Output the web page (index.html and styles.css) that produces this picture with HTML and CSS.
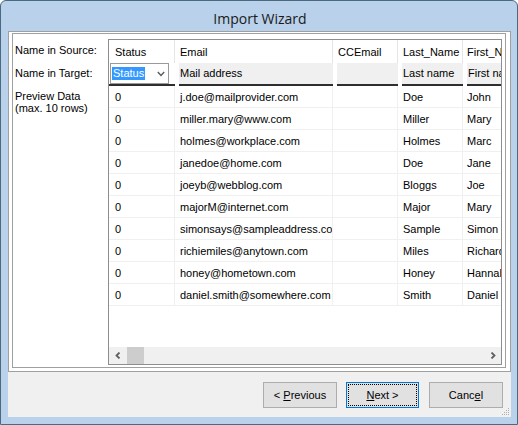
FILE: index.html
```html
<!DOCTYPE html>
<html>
<head>
<meta charset="utf-8">
<link rel="stylesheet" href="styles.css">
</head>
<body>
<div class="window">
  <div class="titlebar">Import Wizard</div>
  <div class="client">
    <div class="panel">
      <div class="inner">
        <div class="labels">
          <div class="lbl l1">Name in Source:</div>
          <div class="lbl l2">Name in Target:</div>
          <div class="lbl l3">Preview Data<br>(max. 10 rows)</div>
        </div>
        <div class="grid">
          <div class="rows">
            <div class="row head">
              <div class="c c1">Status</div>
              <div class="c c2">Email</div>
              <div class="c c3">CCEmail</div>
              <div class="c c4">Last_Name</div>
              <div class="c c5">First_Name</div>
            </div>
            <div class="row target">
              <div class="t t1">
                <div class="combo"><span class="sel">Status</span>
                  <svg class="chev" width="8" height="6" viewBox="0 0 8 6"><polyline points="0.8,1 4,4.4 7.2,1" fill="none" stroke="#5a5a5a" stroke-width="1.4"/></svg>
                </div>
              </div>
              <div class="t t2"><div class="tb">Mail address</div></div>
              <div class="t t3"><div class="tb"></div></div>
              <div class="t t4"><div class="tb">Last name</div></div>
              <div class="t t5"><div class="tb">First name</div></div>
            </div>
            <div class="row data"><div class="c c1">0</div><div class="c c2">j.doe@mailprovider.com</div><div class="c c3"></div><div class="c c4">Doe</div><div class="c c5">John</div></div>
            <div class="row data"><div class="c c1">0</div><div class="c c2">miller.mary@www.com</div><div class="c c3"></div><div class="c c4">Miller</div><div class="c c5">Mary</div></div>
            <div class="row data"><div class="c c1">0</div><div class="c c2">holmes@workplace.com</div><div class="c c3"></div><div class="c c4">Holmes</div><div class="c c5">Marc</div></div>
            <div class="row data"><div class="c c1">0</div><div class="c c2">janedoe@home.com</div><div class="c c3"></div><div class="c c4">Doe</div><div class="c c5">Jane</div></div>
            <div class="row data"><div class="c c1">0</div><div class="c c2">joeyb@webblog.com</div><div class="c c3"></div><div class="c c4">Bloggs</div><div class="c c5">Joe</div></div>
            <div class="row data"><div class="c c1">0</div><div class="c c2">majorM@internet.com</div><div class="c c3"></div><div class="c c4">Major</div><div class="c c5">Mary</div></div>
            <div class="row data"><div class="c c1">0</div><div class="c c2">simonsays@sampleaddress.com</div><div class="c c3"></div><div class="c c4">Sample</div><div class="c c5">Simon</div></div>
            <div class="row data"><div class="c c1">0</div><div class="c c2">richiemiles@anytown.com</div><div class="c c3"></div><div class="c c4">Miles</div><div class="c c5">Richard</div></div>
            <div class="row data"><div class="c c1">0</div><div class="c c2">honey@hometown.com</div><div class="c c3"></div><div class="c c4">Honey</div><div class="c c5">Hannah</div></div>
            <div class="row data"><div class="c c1">0</div><div class="c c2">daniel.smith@somewhere.com</div><div class="c c3"></div><div class="c c4">Smith</div><div class="c c5">Daniel</div></div>
          </div>
          <div class="hscroll">
            <div class="sbtn"><svg width="6" height="7" viewBox="0 0 6 7"><polyline points="4.5,0.5 1.5,3.5 4.5,6.5" fill="none" stroke="#606060" stroke-width="1.8"/></svg></div>
            <div class="thumb"></div>
            <div class="track"></div>
            <div class="sbtn"><svg width="6" height="7" viewBox="0 0 6 7"><polyline points="1.5,0.5 4.5,3.5 1.5,6.5" fill="none" stroke="#606060" stroke-width="1.8"/></svg></div>
          </div>
        </div>
      </div>
    </div>
    <div class="buttons">
      <button class="btn">&lt; <u>P</u>revious</button>
      <button class="btn next"><u>N</u>ext &gt;</button>
      <button class="btn cancel">Canc<u>e</u>l</button>
      <svg class="grip" width="11" height="11" viewBox="0 0 11 11">
        <rect x="8" y="2" width="1" height="1" fill="#b0b0b0"/>
        <rect x="6" y="4" width="1" height="1" fill="#b0b0b0"/>
        <rect x="8" y="4" width="1" height="1" fill="#b0b0b0"/>
        <rect x="4" y="6" width="1" height="1" fill="#b0b0b0"/>
        <rect x="6" y="6" width="1" height="1" fill="#b0b0b0"/>
        <rect x="8" y="6" width="1" height="1" fill="#b0b0b0"/>
        <rect x="2" y="8" width="1" height="1" fill="#b0b0b0"/>
        <rect x="4" y="8" width="1" height="1" fill="#b0b0b0"/>
        <rect x="6" y="8" width="1" height="1" fill="#b0b0b0"/>
        <rect x="8" y="8" width="1" height="1" fill="#b0b0b0"/>
      </svg>
    </div>
  </div>
</div>
</body>
</html>
```
FILE: styles.css
```css
html, body {
  margin: 0;
  padding: 0;
  width: 518px;
  height: 425px;
  overflow: hidden;
  background: #ffffff;
}
* { box-sizing: border-box; }

.window {
  width: 518px;
  height: 425px;
  border: 1px solid #4a6a80;
  border-radius: 6px 6px 0 0;
  background: #b9d1ea;
  display: flex;
  flex-direction: column;
  font-family: "Liberation Sans", Arial, sans-serif;
  font-size: 11px;
  color: #000;
}

.titlebar {
  height: 30px;
  flex: none;
  text-align: center;
  font-family: "Open Sans", "Liberation Sans", sans-serif;
  font-size: 14px;
  line-height: 16px;
  padding-top: 10px;
  color: #1a1a1a;
  padding-left: 2px;
}

.client {
  flex: 1;
  margin: 0 6px 7px 7px;
  background: #f0f0f0;
  display: flex;
  flex-direction: column;
}

.panel {
  height: 341px;
  flex: none;
  border: 1px solid #a0a0a0;
  background: #fff;
  padding: 1px 4px 3px 3px;
  display: flex;
}

.inner {
  flex: 1;
  border: 1px solid #a0a0a0;
  display: flex;
}

.labels {
  width: 95px;
  flex: none;
  padding: 9px 0 0 2px;
}
.lbl { line-height: 14px; white-space: nowrap; }
.l2 { margin-top: 9px; }
.l3 { margin-top: 10px; line-height: 12px; }

.grid {
  width: 394px;
  height: 326px;
  margin-top: 5px;
  border: 1px solid #8e8e8e;
  background: #fff;
  display: flex;
  flex-direction: column;
  overflow: hidden;
}

.rows {
  flex: 1;
  overflow: hidden;
}

.row {
  display: flex;
  white-space: nowrap;
}

.c {
  flex: none;
  overflow: hidden;
  border-right: 1px solid #f0f0f0;
  padding-left: 5px;
}
.c1 { width: 66px; padding-left: 6px; }
.c2 { width: 158px; }
.c3 { width: 65px; }
.c4 { width: 65px; }
.c5 { width: 80px; padding-left: 4px; }

.head { height: 23px; }
.head .c {
  border-right-color: #e5e5e5;
  line-height: 21px;
  padding-top: 2px;
}

.target { height: 23px; }
.t { flex: none; height: 23px; }
.t1 { width: 66px; padding: 0 1px; }
.t2 { width: 158px; padding-left: 4px; }
.t3 { width: 65px; padding-left: 4px; }
.t4 { width: 65px; padding-left: 4px; }
.t5 { width: 80px; padding-left: 4px; }
.tb {
  height: 23px;
  background: #f0f0f0;
  border-bottom: 2px solid #2e2e2e;
  line-height: 21px;
  padding-left: 1px;
  overflow: hidden;
}
.t1 {
  border-bottom: 2px solid #2e2e2e;
}
.combo {
  width: 59px;
  height: 21px;
  border: 1px solid #9a9a9a;
  background: #fff;
  display: flex;
  align-items: center;
  padding-left: 1px;
}
.sel {
  background: #3399ff;
  color: #fff;
  line-height: 13px;
  padding: 0 1px;
}
.chev { margin-left: auto; margin-right: 3px; margin-top: 1px; }

.data { height: 22px; }
.data .c {
  border-bottom: 1px solid #f0f0f0;
  line-height: 19px;
  padding-top: 2px;
}

.hscroll {
  height: 17px;
  flex: none;
  background: #f0f0f0;
  display: flex;
}
.sbtn {
  width: 17px;
  display: flex;
  align-items: center;
  justify-content: center;
}
.thumb {
  width: 17px;
  margin-left: 1px;
  background: #cdcdcd;
}
.track { flex: 1; }

.buttons {
  flex: 1;
  display: flex;
  justify-content: flex-end;
  align-items: flex-start;
  padding: 10px 8px 0 0;
  position: relative;
}
.btn {
  width: 74px;
  height: 26px;
  border: 1px solid #adadad;
  background: #e1e1e1;
  font-family: "Liberation Sans", Arial, sans-serif;
  font-size: 11px;
  color: #000;
  padding: 0;
  margin: 0;
}
.next {
  width: 73px;
  margin-left: 9px;
  border-color: #0078d7;
  outline: 1px dotted #000;
  outline-offset: -3px;
}
.cancel { margin-left: 10px; }

.grip {
  position: absolute;
  right: 0;
  bottom: 0;
}
```
